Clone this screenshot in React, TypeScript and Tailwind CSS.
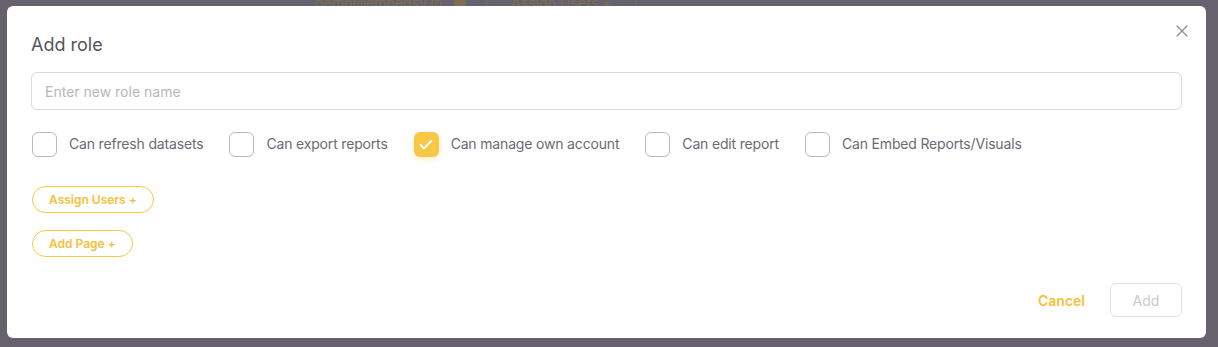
import { X, Check } from 'lucide-react';

const permissions = [
  { label: 'Can refresh datasets', checked: false },
  { label: 'Can export reports', checked: false },
  { label: 'Can manage own account', checked: true },
  { label: 'Can edit report', checked: false },
  { label: 'Can Embed Reports/Visuals', checked: false },
];

function Checkbox({ checked }: { checked: boolean }) {
  if (checked) {
    return (
      <span className="flex h-[25px] w-[25px] items-center justify-center rounded-md bg-[#f7c846] shadow-[0_2px_5px_rgba(247,200,70,0.35)]">
        <Check className="h-4 w-4 text-white" strokeWidth={3} />
      </span>
    );
  }
  return <span className="h-[25px] w-[25px] rounded-md border-[1.5px] border-[#b9b9bf] bg-white" />;
}

export default function App() {
  return (
    <div className="h-[347px] w-[1218px] overflow-hidden bg-[#65626e] font-['Inter',sans-serif]">
      {/* page behind the overlay, only its bottom edge shows */}
      <div className="relative h-[6px] overflow-hidden">
        <div className="absolute -top-[9px] left-[315px] flex items-center gap-3 text-[14px] text-[#7d6e52]">
          <span>demo@embedsy.io</span>
          <span className="h-3 w-3 rounded-full bg-[#7d6e52]" />
          <span className="ml-2 rounded-full border border-[#7d6e52] px-6">Assign Users +</span>
        </div>
      </div>
      <div className="relative ml-[7px] flex h-[332px] w-[1199px] flex-col rounded-md bg-white px-6 pt-[27px] pb-[21px]">
        <button className="absolute right-[14px] top-[15px] text-[#8b8b92]">
          <X className="h-[20px] w-[20px]" strokeWidth={1.5} />
        </button>
        <h2 className="h-6 text-[18px] leading-6 text-[#55545f]">Add role</h2>
        <input
          placeholder="Enter new role name"
          className="mt-[15px] h-[38px] w-full rounded-md border border-[#dadada] px-[13px] text-[14px] text-[#55545f] outline-none placeholder:text-[#b7b7bc]"
        />
        <div className="mt-[22px] flex items-center gap-[26px] pl-px">
          {permissions.map((p) => (
            <label key={p.label} className="flex items-center gap-3 text-[14px] tracking-[-0.17px] text-[#6b6a74]">
              <Checkbox checked={p.checked} />
              <span className="-mt-[2px]">{p.label}</span>
            </label>
          ))}
        </div>
        <div className="mt-[29px] flex flex-col items-start gap-[17px] pl-px">
          <button className="h-[27px] rounded-full border border-[#f5c842] px-4 text-[12px] font-semibold text-[#f5c13c]">
            Assign Users +
          </button>
          <button className="h-[27px] rounded-full border border-[#f5c842] px-4 text-[12px] font-semibold text-[#f5c13c]">
            Add Page +
          </button>
        </div>
        <div className="mt-auto flex items-center justify-end gap-[25px]">
          <button className="text-[14px] font-semibold text-[#f5c13c]">Cancel</button>
          <button className="h-[34px] w-[72px] rounded-md border border-[#e3e3e3] text-[14px] text-[#c8c8cc]">Add</button>
        </div>
      </div>
    </div>
  );
}
